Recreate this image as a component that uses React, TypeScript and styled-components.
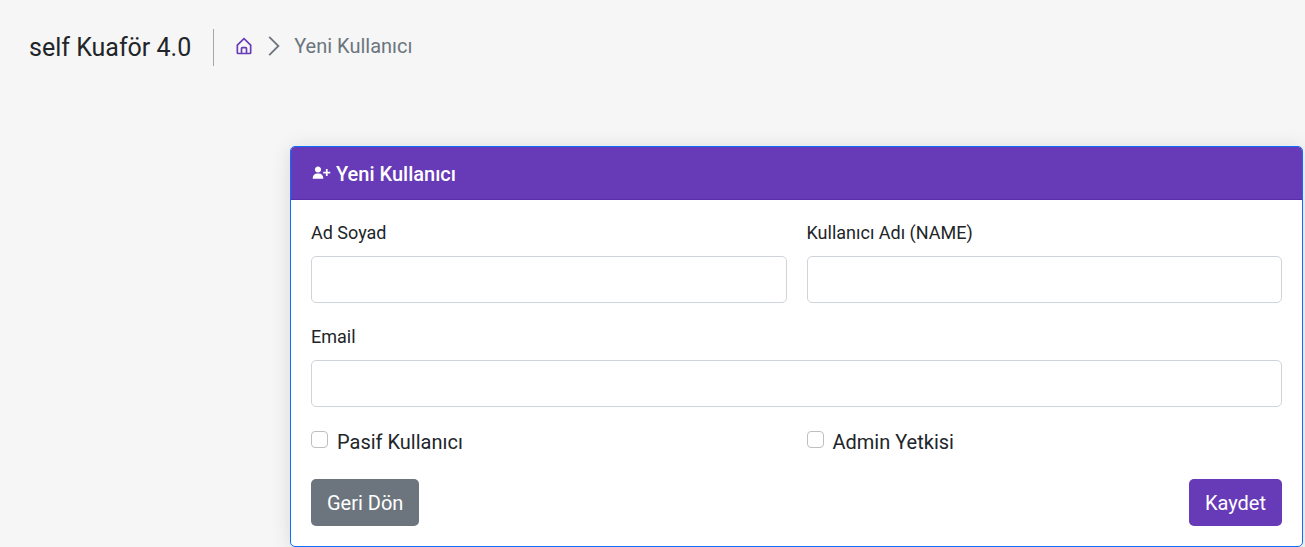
import React from 'react';
import styled, { createGlobalStyle } from 'styled-components';
import { BiHomeAlt, BiSolidUserPlus } from 'react-icons/bi';

const GlobalStyle = createGlobalStyle`
  *, *::before, *::after { box-sizing: border-box; }
  body {
    margin: 0;
    background: #f6f6f6;
    color: #212529;
    font-family: Roboto, "Liberation Sans", sans-serif;
    font-size: 20px;
    line-height: 30px;
  }
`;

const TopBar = styled.header`
  display: flex;
  align-items: center;
  padding: 29px 29px 0;
`;

const Brand = styled.div`
  padding-right: 22px;
  border-right: 1px solid #a4a7aa;
  font-size: 25px;
  line-height: 37px;
`;

const Breadcrumb = styled.nav`
  display: flex;
  align-items: center;
  padding: 0 0 4px 20px;
  color: #6c757d;
`;

const HomeLink = styled.a`
  display: flex;
  color: #673ab7;
`;

const Chevron = styled.svg`
  width: 12px;
  height: 20px;
  margin: 0 14px;
`;

const Main = styled.main`
  padding: 80px 2px 0 290px;
`;

const Card = styled.section`
  border: 1px solid #0d6efd;
  border-radius: 5px;
  background: #fff;
  box-shadow: 0 2px 20px rgba(0, 0, 0, 0.12);
`;

const CardHeader = styled.div`
  display: flex;
  align-items: center;
  gap: 4px;
  height: 53px;
  padding: 0 20px;
  border-bottom: 1px solid #5a2ea6;
  border-radius: 4px 4px 0 0;
  background: #673ab7;
  color: #fff;
`;

const UserIcon = styled(BiSolidUserPlus)`
  width: 21px;
  height: 21px;
  margin-bottom: 2px;
`;

const CardTitle = styled.h1`
  margin: 0;
  padding-top: 2px;
  font-size: 20px;
  font-weight: 500;
  line-height: 30px;
`;

const Form = styled.form`
  display: grid;
  grid-template-columns: 1fr 1fr;
  gap: 21px 20px;
  padding: 20px;
`;

const Field = styled.div<{ $wide?: boolean }>`
  display: flex;
  flex-direction: column;
  gap: 10px;
  grid-column: ${({ $wide }) => ($wide ? '1 / -1' : 'auto')};
`;

const Label = styled.label`
  font-size: 18px;
  line-height: 26px;
`;

const TextInput = styled.input`
  width: 100%;
  height: 47px;
  padding: 8px 16px;
  border: 1px solid #ced4da;
  border-radius: 5px;
  background: #fff;
  color: inherit;
  font: inherit;
`;

const Check = styled.label`
  display: flex;
  align-items: flex-start;
  gap: 9px;
  height: 30px;
  line-height: 28px;
`;

const CheckBox = styled.input`
  appearance: none;
  width: 17px;
  height: 17px;
  margin: 3px 0 0;
  border: 1px solid #bfbfbf;
  border-radius: 4px;
  background: #fff;
  &:checked { background: #673ab7; }
`;

const Actions = styled.div`
  grid-column: 1 / -1;
  display: flex;
  justify-content: space-between;
`;

const Button = styled.button<{ $color: string }>`
  height: 47px;
  padding: 0 16px;
  border: 0;
  border-radius: 5px;
  background: ${({ $color }) => $color};
  color: #fff;
  font: inherit;
`;

export default function App() {
  return (
    <>
      <GlobalStyle />
      <TopBar>
        <Brand>self Kuaför 4.0</Brand>
        <Breadcrumb aria-label="breadcrumb">
          <HomeLink href="#" aria-label="Ana sayfa">
            <BiHomeAlt size={20} />
          </HomeLink>
          <Chevron viewBox="0 0 12 20" fill="none" stroke="currentColor" strokeWidth="1.8" aria-hidden="true">
            <path d="M1.2 0.8 L10.4 10 L1.2 19.2" />
          </Chevron>
          <span>Yeni Kullanıcı</span>
        </Breadcrumb>
      </TopBar>
      <Main>
        <Card>
          <CardHeader>
            <UserIcon />
            <CardTitle>Yeni Kullanıcı</CardTitle>
          </CardHeader>
          <Form>
            <Field>
              <Label htmlFor="fullname">Ad Soyad</Label>
              <TextInput id="fullname" type="text" />
            </Field>
            <Field>
              <Label htmlFor="username">Kullanıcı Adı (NAME)</Label>
              <TextInput id="username" type="text" />
            </Field>
            <Field $wide>
              <Label htmlFor="email">Email</Label>
              <TextInput id="email" type="email" />
            </Field>
            <Check>
              <CheckBox type="checkbox" />
              Pasif Kullanıcı
            </Check>
            <Check>
              <CheckBox type="checkbox" />
              Admin Yetkisi
            </Check>
            <Actions>
              <Button type="button" $color="#6c757d">Geri Dön</Button>
              <Button type="submit" $color="#673ab7">Kaydet</Button>
            </Actions>
          </Form>
        </Card>
      </Main>
    </>
  );
}
